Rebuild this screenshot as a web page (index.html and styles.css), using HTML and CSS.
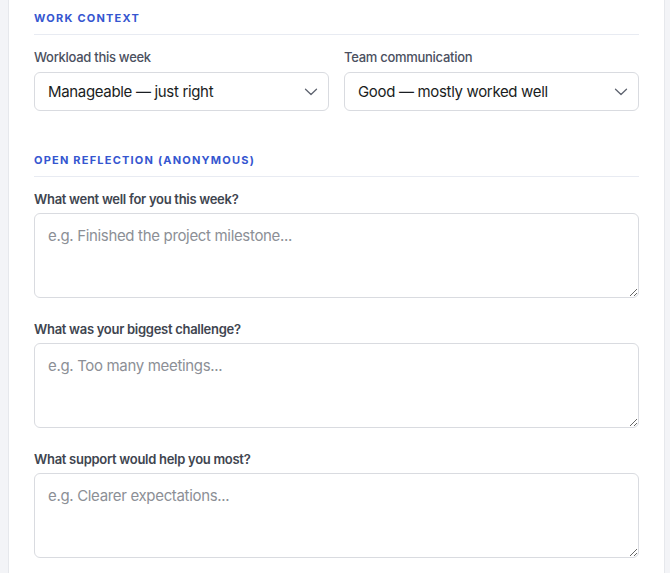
FILE: index.html
```html
<!DOCTYPE html>
<html lang="en">
<head>
  <meta charset="UTF-8">
  <meta name="viewport" content="width=device-width, initial-scale=1.0">
  <title>Weekly Check-in</title>
  <link rel="stylesheet" href="styles.css">
</head>
<body>
  <main class="card">
    <section class="section">
      <h3 class="section-title">Work Context</h3>
      <div class="row">
        <div class="field">
          <label class="label" for="workload">Workload this week</label>
          <div class="select-wrap">
            <select id="workload" class="select">
              <option>Manageable — just right</option>
              <option>Too much</option>
              <option>Too little</option>
            </select>
            <svg class="chevron" width="14" height="8" viewBox="0 0 14 8" fill="none">
              <path d="M1.5 1.2l5.5 5.3 5.5-5.3" stroke="#5f6470" stroke-width="1.3" stroke-linecap="round" stroke-linejoin="round"/>
            </svg>
          </div>
        </div>
        <div class="field">
          <label class="label" for="communication">Team communication</label>
          <div class="select-wrap">
            <select id="communication" class="select">
              <option>Good — mostly worked well</option>
              <option>Great</option>
              <option>Poor</option>
            </select>
            <svg class="chevron" width="14" height="8" viewBox="0 0 14 8" fill="none">
              <path d="M1.5 1.2l5.5 5.3 5.5-5.3" stroke="#5f6470" stroke-width="1.3" stroke-linecap="round" stroke-linejoin="round"/>
            </svg>
          </div>
        </div>
      </div>
    </section>

    <section class="section">
      <h3 class="section-title">Open Reflection (Anonymous)</h3>
      <div class="field">
        <label class="label label-strong" for="well">What went well for you this week?</label>
        <textarea id="well" class="textarea" placeholder="e.g. Finished the project milestone..."></textarea>
      </div>
      <div class="field">
        <label class="label label-strong" for="challenge">What was your biggest challenge?</label>
        <textarea id="challenge" class="textarea" placeholder="e.g. Too many meetings..."></textarea>
      </div>
      <div class="field">
        <label class="label label-strong" for="support">What support would help you most?</label>
        <textarea id="support" class="textarea" placeholder="e.g. Clearer expectations..."></textarea>
      </div>
    </section>
  </main>
</body>
</html>
```

FILE: styles.css
```css
* {
  box-sizing: border-box;
}
body {
  margin: 0;
  padding: 0 0 0 8px;
  background-color: #f3f4f7;
  font-family: Inter, "Noto Sans", Arial, sans-serif;
  color: #1f2328;
}
.card {
  width: 657px;
  background-color: #fff;
  border-left: 1px solid #e6e8ec;
  border-right: 1px solid #e6e8ec;
  padding: 11px 25px 20px;
}
.section {
  margin-bottom: 22px;
}
.section-title {
  margin: 0 0 13px;
  padding-bottom: 9px;
  border-bottom: 1px solid #e8ebf2;
  font-size: 11px;
  line-height: 14px;
  font-weight: 700;
  letter-spacing: 0.11em;
  text-transform: uppercase;
  color: #3556d0;
}
.row {
  display: grid;
  grid-template-columns: 1fr 1fr;
  gap: 15px;
}
.field {
  margin-bottom: 22px;
}
.row .field {
  margin-bottom: 20px;
}
.label {
  display: block;
  margin-bottom: 5px;
  font-size: 13px;
  line-height: 18px;
  font-weight: 500;
  letter-spacing: -0.022em;
  color: #4b5060;
}
.row .label {
  margin-bottom: 6px;
}
.label-strong {
  font-weight: 600;
  color: #40454f;
}
.select-wrap {
  position: relative;
}
.select {
  appearance: none;
  -webkit-appearance: none;
  width: 100%;
  height: 39px;
  margin: 0;
  padding: 0 40px 0 13px;
  border: 1px solid #d9dbe0;
  border-radius: 6px;
  background-color: #fff;
  font-family: inherit;
  font-size: 15px;
  letter-spacing: -0.022em;
  color: #1a1d22;
}
.chevron {
  position: absolute;
  right: 11px;
  top: 16px;
  pointer-events: none;
}
.textarea {
  display: block;
  width: 100%;
  height: 85px;
  margin: 0;
  padding: 12px 13px;
  border: 1px solid #d9dbe0;
  border-radius: 6px;
  font-family: inherit;
  font-size: 15px;
  line-height: 20px;
  letter-spacing: -0.022em;
  color: #1a1d22;
  resize: vertical;
}
.textarea::placeholder {
  color: #8c8f96;
}
```
